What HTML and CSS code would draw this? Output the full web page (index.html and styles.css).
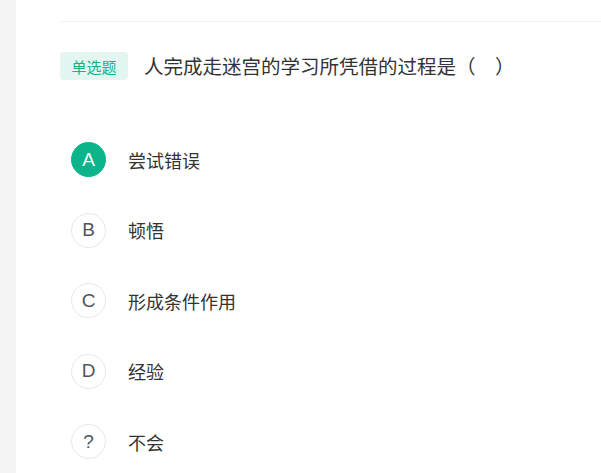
FILE: index.html
```html
<!DOCTYPE html>
<html lang="zh-CN">
<head>
<meta charset="utf-8">
<link rel="stylesheet" href="styles.css">
</head>
<body>
<div class="page">
  <aside class="side"></aside>
  <main class="main">
    <div class="divider"></div>
    <div class="question">
      <span class="tag">单选题</span>
      <span class="title">人完成走迷宫的学习所凭借的过程是（　）</span>
    </div>
    <ul class="options">
      <li class="option selected"><span class="mark">A</span><span class="text">尝试错误</span></li>
      <li class="option"><span class="mark">B</span><span class="text">顿悟</span></li>
      <li class="option"><span class="mark">C</span><span class="text">形成条件作用</span></li>
      <li class="option"><span class="mark">D</span><span class="text">经验</span></li>
      <li class="option"><span class="mark">?</span><span class="text">不会</span></li>
    </ul>
  </main>
</div>
</body>
</html>
```
FILE: styles.css
```css
html, body {
  margin: 0;
  padding: 0;
  background: #ffffff;
  font-family: "Noto Sans CJK SC", "Noto Sans", sans-serif;
}
.page {
  display: flex;
  height: 473px;
  overflow: hidden;
}
.side {
  width: 16px;
  flex: none;
  background: #f4f4f4;
}
.main {
  flex: 1;
  padding-left: 44px;
}
.divider {
  height: 1px;
  margin-top: 21px;
  background: #f0f0f0;
}
.question {
  display: flex;
  align-items: center;
  margin-top: 30px;
  height: 28px;
}
.tag {
  display: flex;
  align-items: center;
  justify-content: center;
  width: 68px;
  height: 28px;
  border-radius: 4px;
  background: #e4f6f1;
  color: #16b189;
  font-size: 15px;
}
.title {
  margin-left: 16px;
  font-size: 19.5px;
  color: #333333;
  line-height: 28px;
  text-spacing-trim: space-all;
  font-feature-settings: "halt" 0, "chws" 0;
}
.options {
  list-style: none;
  margin: 62px 0 0 0;
  padding: 0 0 0 11px;
  display: flex;
  flex-direction: column;
  gap: 35.5px;
}
.option {
  display: flex;
  align-items: center;
  height: 35px;
}
.mark {
  box-sizing: border-box;
  width: 35px;
  height: 35px;
  border-radius: 50%;
  border: 1px solid #e8e8e8;
  display: flex;
  align-items: center;
  justify-content: center;
  font-family: "Liberation Sans", Arial, sans-serif;
  font-size: 19px;
  color: #50555f;
}
.selected .mark {
  background: #0bb48a;
  border-color: #0bb48a;
  color: #ffffff;
}
.text {
  margin-left: 22px;
  font-size: 18px;
  color: #333333;
}
```
